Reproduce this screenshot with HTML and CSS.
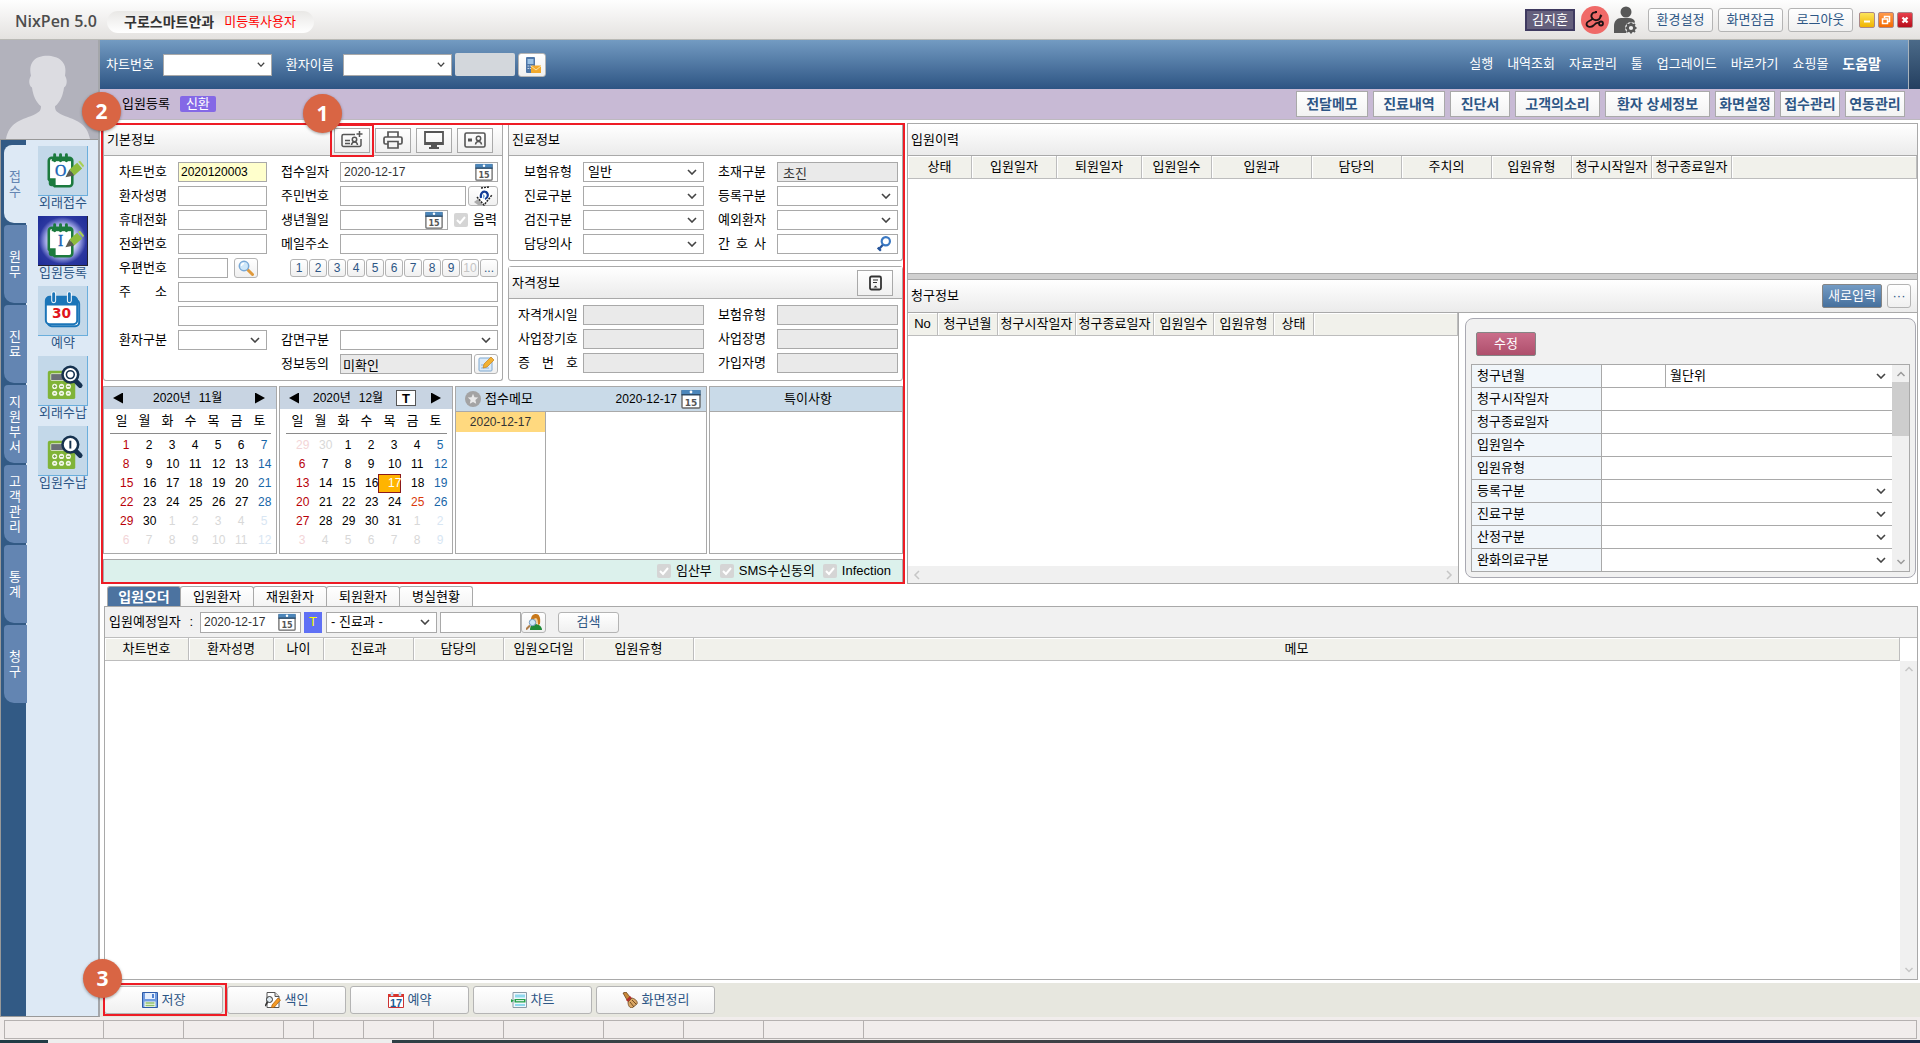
FILE: index.html
```html
<!DOCTYPE html>
<html lang="ko">
<head>
<meta charset="utf-8">
<title>NixPen 5.0</title>
<link rel="stylesheet" href="styles.css">
</head>
<body>
<svg class="defs" aria-hidden="true">
  <symbol id="i-cal" viewBox="0 0 20 20">
    <path d="M1 2h18v16a1 1 0 0 1-1 1H2a1 1 0 0 1-1-1z" fill="#fff" stroke="#666" stroke-width="1.4"/>
    <path d="M.5 1h19v5H.5z" fill="#4c86ba"/><path d="M.5 5h19v1.500H.5z" fill="#2c4a66"/><circle cx="10" cy="3" r="1.400" fill="#fff"/>
    <text x="10" y="17" text-anchor="middle" font-family="DejaVu Sans" font-weight="bold" font-size="9" fill="#555">15</text>
  </symbol>
  <symbol id="i-lens" viewBox="0 0 16 16">
    <path d="M9.500 9.500l5 5" stroke="#e09a3c" stroke-width="3" stroke-linecap="round"/>
    <circle cx="6" cy="6" r="4.700" fill="#cfe8fa" stroke="#7aa9d6" stroke-width="1.500"/><path d="M3.500 6a2.500 2.500 0 0 1 2.500-2.500" stroke="#fff" fill="none" stroke-width="1.300"/>
  </symbol>
  <symbol id="i-note" viewBox="0 0 50 50">
    <path d="M14 12h18a3 3 0 0 1 3 3v23a3 3 0 0 1-3 3H17l-6-7V15a3 3 0 0 1 3-3z" fill="#fff" stroke="#1c7a3e" stroke-width="2.600"/>
    <path d="M11 33h7v8h-4a3 3 0 0 1-3-3z" fill="#1c7a3e"/>
    <path d="M14 14h20" stroke="#1c7a3e" stroke-width="3"/>
    <path d="M17 9v6M23 9v6M29 9v6" stroke="#1c7a3e" stroke-width="3" stroke-linecap="round"/>
    <path d="M32 24l8-7 5 6-8 7z" fill="#8dbb3c"/><path d="M41 16l2-1 4 5-1 2z" fill="#a9d053"/><path d="M32 24l5 6-9 2z" fill="#5b5b52"/>
  </symbol>
  <symbol id="i-calc" viewBox="0 0 50 50">
    <rect x="10" y="15" width="28" height="29" rx="2" fill="#80b438"/>
    <rect x="13" y="18" width="16" height="7" rx="1" fill="#6b6f76" stroke="#e8f2d8" stroke-width=".8"/>
    <g fill="#f4f8ea"><circle cx="17" cy="31" r="2.600"/><circle cx="24" cy="31" r="2.600"/><circle cx="31" cy="31" r="2.600"/><circle cx="17" cy="38" r="2.600"/><circle cx="24" cy="38" r="2.600"/><circle cx="31" cy="38" r="2.600"/></g>
    <path d="M15.500 31h3M17 29.500v3M22.500 31h3M29.500 31h3M16 38h2M23 38h2M30 38h2" stroke="#6f9f3a"/>
    <path d="M38 25l5 5" stroke="#16324f" stroke-width="5" stroke-linecap="round"/>
    <circle cx="33" cy="19" r="8" fill="#fff" stroke="#16324f" stroke-width="2.600"/>
  </symbol>
</svg>

<header class="titlebar">
  <h1 class="app-name">NixPen 5.0</h1>
  <div class="clinic"><b>구로스마트안과</b><span>미등록사용자</span></div>
  <div class="title-tools">
    <span class="user-name">김지훈</span>
    <svg class="stetho" viewBox="0 0 28 28"><circle cx="14" cy="14" r="14" fill="#f06a68"/><path d="M15 6.500c-4-.5-6 3-3.500 6 2 2.500 6.500 2.500 8-1.500M11.500 12.500c-2 3-6 2.500-6 5.500 0 3.500 5 3.500 7 1.500 2-2.500 4-3.500 6.500-2.500" fill="none" stroke="#1c1214" stroke-width="1.800"/><circle cx="20" cy="17.500" r="2" fill="none" stroke="#1c1214" stroke-width="1.800"/><path d="M14 6h2M19 11l1.500-2" stroke="#1c1214" stroke-width="2.200"/></svg>
    <svg class="person" viewBox="0 0 24 28"><circle cx="12" cy="6" r="5.500" fill="#585858"/><path d="M0 27V20c0-5 3-8 7-8h8c3 0 5 1 6 4l-9 11z" fill="#585858"/><circle cx="17" cy="22" r="6" fill="#eee"/><circle cx="17" cy="22" r="3.400" fill="none" stroke="#585858" stroke-width="2.600"/><path d="M17 16.500v2M17 25.500v2M11.500 22h2M20.500 22h2M13 18l1.500 1.500M19.500 24.500l1.500 1.500M21 18l-1.500 1.500M14.500 24.500L13 26" stroke="#585858" stroke-width="2"/></svg>
    <div class="title-btns"><button class="btn">환경설정</button><button class="btn">화면잠금</button><button class="btn">로그아웃</button></div>
    <div class="win-btns">
      <button class="win win-min" aria-label="최소화"><svg viewBox="0 0 14 14"><path d="M4 8.500h6" stroke="#fff" stroke-width="2"/></svg></button>
      <button class="win win-max" aria-label="복원"><svg viewBox="0 0 14 14"><path d="M5.500 5V3.500h5v5H9M3.500 6h5v4.500h-5z" fill="none" stroke="#fff" stroke-width="1.500"/></svg></button>
      <button class="win win-close" aria-label="닫기"><svg viewBox="0 0 14 14"><path d="M4.500 4.500l5 5M9.500 4.500l-5 5" stroke="#fff" stroke-width="2.300"/></svg></button>
    </div>
  </div>
</header>

<div class="app">
  <aside class="side">
    <svg class="avatar" viewBox="0 0 98 100" preserveAspectRatio="none"><path d="M0 0h98v100H0z" fill="#b2b2bc"/><path d="M6 100c3-16 14-19 27-24 6-3 8-4 8-9-5-4-8-11-9-19-4-3-3-9-1-12-3-14 5-20 16-20s21 6 18 20c2 3 3 9-1 12-1 8-4 15-9 19 0 5 2 6 8 9 13 5 24 8 27 24z" fill="#dcdce1"/></svg>
    <div class="side-body">
      <nav class="vtabs">
        <a href="#" class="vtab active"><span>접수</span></a><a href="#" class="vtab"><span>원무</span></a><a href="#" class="vtab"><span>진료</span></a><a href="#" class="vtab"><span>지원부서</span></a><a href="#" class="vtab"><span>고객관리</span></a><a href="#" class="vtab"><span>통계</span></a><a href="#" class="vtab"><span>청구</span></a>
      </nav>
      <nav class="tiles">
        <a href="#" class="tile"><svg viewBox="0 0 50 50"><use href="#i-note"/><text x="23" y="31" text-anchor="middle" font-family="Liberation Serif" font-size="16" fill="#1463b4" stroke="#1463b4" stroke-width=".4">O</text></svg>외래접수</a>
        <a href="#" class="tile selected"><svg viewBox="0 0 50 50"><use href="#i-note"/><text x="23" y="31" text-anchor="middle" font-family="Liberation Serif" font-size="16" fill="#1463b4" stroke="#1463b4" stroke-width=".4">I</text></svg>입원등록</a>
        <a href="#" class="tile"><svg viewBox="0 0 50 50"><rect x="10" y="14" width="32" height="27" rx="4" fill="#fff" stroke="#1b75b8" stroke-width="2"/><rect x="8" y="11" width="32" height="28" rx="4" fill="#fff" stroke="#1b75b8" stroke-width="2"/><path d="M8 20v-5a4 4 0 0 1 4-4h24a4 4 0 0 1 4 4v5z" fill="#1b75b8"/><path d="M16 8v7M32 8v7" stroke="#fff" stroke-width="5" stroke-linecap="round"/><path d="M16 8v7M32 8v7" stroke="#1b75b8" stroke-width="3" stroke-linecap="round"/><text x="24" y="33" text-anchor="middle" font-family="DejaVu Sans" font-weight="bold" font-size="14" fill="#e0141c">30</text></svg>예약</a>
        <a href="#" class="tile"><svg viewBox="0 0 50 50"><use href="#i-calc"/><circle cx="33" cy="19" r="4" fill="none" stroke="#16324f" stroke-width="1.600"/></svg>외래수납</a>
        <a href="#" class="tile"><svg viewBox="0 0 50 50"><use href="#i-calc"/><path d="M33 15v8" stroke="#16324f" stroke-width="2"/></svg>입원수납</a>
      </nav>
    </div>
  </aside>

  <div class="main">
    <div class="topband">
      <label for="q-chart">차트번호</label><select id="q-chart" class="quick"><option></option></select>
      <label for="q-name">환자이름</label><select id="q-name" class="quick"><option></option></select>
      <span class="quick-gray"></span>
      <button class="btn sms" aria-label="문자"><svg viewBox="0 0 18 18"><rect x="3" y="1" width="9" height="16" rx="1" fill="#4f77a8"/><path d="M4.500 3h6v5h-6z" fill="#9cc3e6"/><path d="M4.500 10h6M4.500 12.500h6" stroke="#c8d8e8" stroke-dasharray="1.500 .7"/><path d="M8 9.500h10V17H8z" fill="#f2a92c"/><path d="M8 10l5 4 5-4" fill="none" stroke="#fbe2a6"/></svg></button>
      <nav class="menu"><a href="#">실행</a><a href="#">내역조회</a><a href="#">자료관리</a><a href="#">툴</a><a href="#">업그레이드</a><a href="#">바로가기</a><a href="#">쇼핑몰</a><a href="#"><b>도움말</b></a></nav>
      <span class="band-end"></span>
    </div>
    <div class="subband">
      <h2>입원등록</h2><span class="tag">신환</span>
      <div class="sub-btns"><button>전달메모</button><button>진료내역</button><button>진단서</button><button>고객의소리</button><button>환자 상세정보</button><button>화면설정</button><button>접수관리</button><button>연동관리</button></div>
      <span class="mark mark-2">2</span>
    </div>

    <main class="content">
      <div class="upper">
        <section class="patient">
          <div class="forms">
            <div class="panel first">
              <div class="panel-head"><h3>기본정보</h3>
                <div class="head-btns">
                  <button class="tool target" aria-label="신규 등록"><svg viewBox="0 0 22 18"><path d="M14 3.500H2.500a1.500 1.500 0 0 0-1.500 1.500v9a1.500 1.500 0 0 0 1.500 1.500h16a1.500 1.500 0 0 0 1.500-1.500V8M4 9.500h5M4 12.500h5M10.500 14c.3-2 1.500-3 3-3s2.700 1 3 3M18.500 0v6M15.500 3h6" fill="none" stroke="#555" stroke-width="1.500"/><circle cx="13.500" cy="8.500" r="2.200" fill="none" stroke="#555" stroke-width="1.500"/></svg></button>
                  <button class="tool" aria-label="인쇄"><svg viewBox="0 0 22 18"><path d="M6 6V1h10v5M6 13H3.500A1.500 1.500 0 0 1 2 11.500V7.500A1.500 1.500 0 0 1 3.500 6h15A1.500 1.500 0 0 1 20 7.500v4a1.500 1.500 0 0 1-1.500 1.500H16M6 10.500h10V17H6z" fill="none" stroke="#555" stroke-width="1.700"/></svg></button>
                  <button class="tool" aria-label="화면"><svg viewBox="0 0 22 18"><path d="M2 1h18v12H2z" fill="none" stroke="#555" stroke-width="1.800"/><path d="M2 11h18v2H2zM8 13h6v3H8zM6 16h10v2H6z" fill="#555"/></svg></button>
                  <button class="tool" aria-label="신분증"><svg viewBox="0 0 22 18"><rect x="1" y="2" width="20" height="14" rx="1.500" fill="none" stroke="#555" stroke-width="1.600"/><path d="M4 7.500h4v3H4z" fill="#555"/><circle cx="14.500" cy="7.500" r="2.200" fill="none" stroke="#555" stroke-width="1.500"/><path d="M11.500 13.500c.3-2.300 1.500-3 3-3s2.700.7 3 3" fill="none" stroke="#555" stroke-width="1.500"/></svg></button>
                </div>
                <span class="mark mark-1">1</span>
              </div>
              <form class="grid basic">
                <label for="f1">차트번호</label><input id="f1" class="yellow" value="2020120003">
                <label for="f2">접수일자</label><span class="datebox"><input id="f2" value="2020-12-17"><svg><use href="#i-cal"/></svg></span>
                <label for="f3">환자성명</label><input id="f3">
                <label for="f4">주민번호</label><span class="line"><input id="f4"><button type="button" class="btn w30" aria-label="조회"><svg class="i20" viewBox="0 0 20 20"><path d="M1 16l4-3 5 6H5z" fill="#aaa"/><path d="M8 2l8-1 3 8-8 10-7-8z" fill="#fff"/><path d="M8 2l8-1M4 11l7 8 8-10" fill="none" stroke="#222" stroke-width="1.500" stroke-dasharray="2 1"/><path d="M8 12c-1-5 2-7 5-6 3 2 2 6-1 7" fill="none" stroke="#123c96" stroke-width="2.200"/><path d="M10 8l2 2-2 3z" fill="#6aa3dc"/></svg></button></span>
                <label for="f5">휴대전화</label><input id="f5">
                <label for="f6">생년월일</label><span class="line"><span class="datebox birth"><input id="f6"><svg><use href="#i-cal"/></svg></span><label class="check"><input type="checkbox" checked disabled>음력</label></span>
                <label for="f7">전화번호</label><input id="f7">
                <label for="f8">메일주소</label><input id="f8">
                <label for="f9">우편번호</label><span class="line zip"><input id="f9"><button type="button" class="btn w24" aria-label="검색"><svg class="i16"><use href="#i-lens"/></svg></button></span>
                <span class="nums"><button type="button">1</button><button type="button">2</button><button type="button">3</button><button type="button">4</button><button type="button">5</button><button type="button">6</button><button type="button">7</button><button type="button">8</button><button type="button">9</button><button type="button" disabled>10</button><button type="button">...</button></span>
                <label for="f10" class="spread">주 소</label><input id="f10" class="wide">
                <input class="wide addr2" aria-label="상세주소">
                <label for="f11">환자구분</label><select id="f11"><option></option></select>
                <label for="f12">감면구분</label><select id="f12"><option></option></select>
                <label for="f13" class="consent">정보동의</label><span class="line"><input id="f13" class="off dark" value="미확인" readonly><button type="button" class="btn w24" aria-label="편집"><svg class="i16" viewBox="0 0 16 16"><rect x="1" y="2" width="13" height="13" rx="1" fill="#dbeaf8" stroke="#7fa8cf"/><path d="M3 9h6M3 12h8" stroke="#8db5dc"/><path d="M5 12l1-4 7-7 3 3-7 7z" fill="#f2b233" stroke="#c5811b" stroke-width=".7"/></svg></button></span>
              </form>
            </div>
            <div class="stack">
              <div class="panel first">
                <div class="panel-head"><h3>진료정보</h3></div>
                <form class="grid visit">
                  <label for="v1">보험유형</label><select id="v1"><option>일반</option></select>
                  <label for="v2">초재구분</label><input id="v2" class="off pad" value="초진" readonly>
                  <label for="v3">진료구분</label><select id="v3"><option></option></select>
                  <label for="v4">등록구분</label><select id="v4"><option></option></select>
                  <label for="v5">검진구분</label><select id="v5"><option></option></select>
                  <label for="v6">예외환자</label><select id="v6"><option></option></select>
                  <label for="v7">담당의사</label><select id="v7"><option></option></select>
                  <label for="v8" class="spread">간 호 사</label><span class="datebox"><input id="v8"><svg viewBox="0 0 20 20"><circle cx="12" cy="7" r="4.600" fill="#fff" stroke="#3a78c2" stroke-width="2.400"/><path d="M8.500 11L4 16M3 14l3.500 3.500" stroke="#24539a" stroke-width="2.500"/></svg></span>
                </form>
              </div>
              <div class="panel">
                <div class="panel-head"><h3>자격정보</h3><div class="head-btns"><button class="tool" aria-label="자격조회"><svg viewBox="0 0 22 18"><rect x="6" y="2.500" width="11" height="13" rx="1.500" fill="none" stroke="#333" stroke-width="1.800"/><path d="M9 6h5M9 8.500h4" stroke="#333"/><path d="M9.500 13.500l2-2 2 2z" fill="#333"/></svg></button></div></div>
                <form class="grid insured">
                  <label for="n1">자격개시일</label><input id="n1" class="off" readonly>
                  <label for="n2">보험유형</label><input id="n2" class="off" readonly>
                  <label for="n3">사업장기호</label><input id="n3" class="off" readonly>
                  <label for="n4">사업장명</label><input id="n4" class="off" readonly>
                  <label for="n5" class="spread">증 번 호</label><input id="n5" class="off" readonly>
                  <label for="n6">가입자명</label><input id="n6" class="off" readonly>
                </form>
              </div>
            </div>
          </div>

          <div class="lower">
            <div class="cal">
              <div class="cal-head"><button class="prev" aria-label="이전"></button><span class="ym"><span>2020년</span><span>11월</span></span><button class="next" aria-label="다음"></button></div>
              <table>
                <thead><tr><th>일</th><th>월</th><th>화</th><th>수</th><th>목</th><th>금</th><th>토</th></tr></thead>
                <tbody>
                <tr><td>1</td><td>2</td><td>3</td><td>4</td><td>5</td><td>6</td><td>7</td></tr>
                <tr><td>8</td><td>9</td><td>10</td><td>11</td><td>12</td><td>13</td><td>14</td></tr>
                <tr><td>15</td><td>16</td><td>17</td><td>18</td><td>19</td><td>20</td><td>21</td></tr>
                <tr><td>22</td><td>23</td><td>24</td><td>25</td><td>26</td><td>27</td><td>28</td></tr>
                <tr><td>29</td><td>30</td><td class="out">1</td><td class="out">2</td><td class="out">3</td><td class="out">4</td><td class="out">5</td></tr>
                <tr><td class="out">6</td><td class="out">7</td><td class="out">8</td><td class="out">9</td><td class="out">10</td><td class="out">11</td><td class="out">12</td></tr>
                </tbody>
              </table>
            </div>
            <div class="cal">
              <div class="cal-head"><button class="prev" aria-label="이전"></button><span class="ym"><span>2020년</span><span>12월</span></span><button class="today">T</button><button class="next" aria-label="다음"></button></div>
              <table>
                <thead><tr><th>일</th><th>월</th><th>화</th><th>수</th><th>목</th><th>금</th><th>토</th></tr></thead>
                <tbody>
                <tr><td class="out">29</td><td class="out">30</td><td>1</td><td>2</td><td>3</td><td>4</td><td>5</td></tr>
                <tr><td>6</td><td>7</td><td>8</td><td>9</td><td>10</td><td>11</td><td>12</td></tr>
                <tr><td>13</td><td>14</td><td>15</td><td>16</td><td class="sel">17</td><td>18</td><td>19</td></tr>
                <tr><td>20</td><td>21</td><td>22</td><td>23</td><td>24</td><td class="holiday">25</td><td>26</td></tr>
                <tr><td>27</td><td>28</td><td>29</td><td>30</td><td>31</td><td class="out">1</td><td class="out">2</td></tr>
                <tr><td class="out">3</td><td class="out">4</td><td class="out">5</td><td class="out">6</td><td class="out">7</td><td class="out">8</td><td class="out">9</td></tr>
                </tbody>
              </table>
            </div>
            <div class="memo">
              <div class="memo-head"><svg class="i16" viewBox="0 0 16 16"><circle cx="8" cy="8" r="8" fill="#a3a3a3"/><path d="M8 2.800l1.500 3.400 3.700.4-2.800 2.500.8 3.600L8 10.900l-3.200 1.800.8-3.600-2.800-2.500 3.700-.4z" fill="#e9e9e9"/></svg><span>접수메모</span><span class="memo-date">2020-12-17</span><svg class="i20"><use href="#i-cal"/></svg></div>
              <div class="memo-body"><div class="memo-list"><div class="memo-item">2020-12-17</div></div></div>
            </div>
            <div class="memo remark"><div class="memo-head">특이사항</div></div>
          </div>
          <div class="flags"><label class="check"><input type="checkbox" checked disabled>임산부</label><label class="check"><input type="checkbox" checked disabled>SMS수신동의</label><label class="check"><input type="checkbox" checked disabled>Infection</label></div>
        </section>

        <div class="right">
          <section class="panel square history">
            <div class="panel-head"><h3>입원이력</h3></div>
            <table class="list"><colgroup><col class="c64"><col class="c85"><col class="c85"><col class="c70"><col class="c100"><col class="c90"><col class="c90"><col class="c80"><col class="c80"><col class="c80"><col></colgroup>
            <thead><tr><th>상태</th><th>입원일자</th><th>퇴원일자</th><th>입원일수</th><th>입원과</th><th>담당의</th><th>주치의</th><th>입원유형</th><th>청구시작일자</th><th>청구종료일자</th><th></th></tr></thead></table>
          </section>
          <div class="splitter"></div>
          <section class="panel square billing">
            <div class="panel-head"><h3>청구정보</h3><div class="bill-btns"><button class="btn-blue">새로입력</button><button class="btn dots" aria-label="더보기">···</button></div></div>
            <div class="bill-body">
              <div class="bill-list">
                <table class="list"><colgroup><col class="c30"><col class="c60"><col class="c78"><col class="c78"><col class="c60"><col class="c60"><col class="c40"><col></colgroup>
                <thead><tr><th>No</th><th>청구년월</th><th>청구시작일자</th><th>청구종료일자</th><th>입원일수</th><th>입원유형</th><th>상태</th><th></th></tr></thead></table>
                <div class="hscroll"><svg viewBox="0 0 8 10"><path d="M6 1L2 5l4 4"/></svg><svg viewBox="0 0 8 10"><path d="M2 1l4 4-4 4"/></svg></div>
              </div>
              <div class="editor">
                <button class="btn-pink">수정</button>
                <div class="prop-wrap">
                  <table class="props">
                    <tr><th>청구년월</th><td class="ym-cell"></td><td><select aria-label="청구단위"><option>월단위</option></select></td></tr>
                    <tr><th>청구시작일자</th><td colspan="2"></td></tr>
                    <tr><th>청구종료일자</th><td colspan="2"></td></tr>
                    <tr><th>입원일수</th><td colspan="2"></td></tr>
                    <tr><th>입원유형</th><td colspan="2"></td></tr>
                    <tr><th>등록구분</th><td colspan="2"><select aria-label="등록구분"><option></option></select></td></tr>
                    <tr><th>진료구분</th><td colspan="2"><select aria-label="진료구분"><option></option></select></td></tr>
                    <tr><th>산정구분</th><td colspan="2"><select aria-label="산정구분"><option></option></select></td></tr>
                    <tr><th>완화의료구분</th><td colspan="2"><select aria-label="완화의료구분"><option></option></select></td></tr>
                  </table>
                  <div class="vscroll"><svg viewBox="0 0 10 8"><path d="M1.500 6L5 2.500 8.500 6"/></svg><span class="thumb"></span><svg viewBox="0 0 10 8"><path d="M1.500 2L5 5.500 8.500 2"/></svg></div>
                </div>
              </div>
            </div>
          </section>
        </div>
      </div>

      <nav class="tabs"><button class="on">입원오더</button><button>입원환자</button><button>재원환자</button><button>퇴원환자</button><button>병실현황</button></nav>
      <section class="orders">
        <form class="filter">
          <label for="o1">입원예정일자 <span>:</span></label>
          <span class="datebox order-date"><input id="o1" value="2020-12-17"><svg><use href="#i-cal"/></svg></span>
          <button type="button" class="t-blue">T</button>
          <select class="dept" aria-label="진료과"><option>- 진료과 -</option></select>
          <span class="finder"><input aria-label="환자 검색"><button type="button" class="btn" aria-label="환자 찾기"><svg class="i16" viewBox="0 0 16 16"><path d="M4 16c0-4 2-6 5-6s7 2 7 6z" fill="#1f8a38"/><circle cx="9.500" cy="6" r="4" fill="#f3cf9b"/><path d="M5 6c0-4 2-6 5-6s5 3 4 10l-2 1c0-3 0-6-2-7z" fill="#c8781a"/><circle cx="6.500" cy="8.500" r="3.200" fill="#cfe8f8" stroke="#6f98bc"/><path d="M4 11.500L0 15.500" stroke="#b07d4a" stroke-width="2"/></svg></button></span>
          <button type="button" class="btn search">검색</button>
        </form>
        <div class="order-body">
          <table class="list"><colgroup><col class="c84"><col class="c85"><col class="c50"><col class="c90"><col class="c90"><col class="c80"><col class="c110"><col></colgroup>
          <thead><tr><th>차트번호</th><th>환자성명</th><th>나이</th><th>진료과</th><th>담당의</th><th>입원오더일</th><th>입원유형</th><th>메모</th></tr></thead></table>
          <div class="vscroll pale"><svg viewBox="0 0 10 8"><path d="M1.500 6L5 2.500 8.500 6"/></svg><svg viewBox="0 0 10 8"><path d="M1.500 2L5 5.500 8.500 2"/></svg></div>
        </div>
      </section>
    </main>

    <div class="actions">
      <span class="mark mark-3">3</span>
      <button class="btn target"><svg class="i16" viewBox="0 0 16 16"><path d="M.5.5h15v15H.5z" fill="#6f9be0" stroke="#2e5ba8"/><path d="M3 1h10v6H3z" fill="#e6effc"/><path d="M10 2h2v4h-2z" fill="#4f80cf"/><path d="M2.500 9.500h11V15h-11z" fill="#f6faf0"/><path d="M3.500 11h9M3.500 13.500h9" stroke="#8fbf6c" stroke-width="1.300"/></svg>저장</button>
      <button class="btn"><svg class="i16" viewBox="0 0 16 16"><path d="M2 .5h8l4 4v11H2z" fill="#fff" stroke="#555"/><path d="M10 .5v4h4" fill="#ddd" stroke="#555"/><circle cx="4.500" cy="7.500" r="3" fill="#dfeaf2" stroke="#333"/><path d="M2.500 10L0 14" stroke="#333" stroke-width="1.600"/><path d="M7 13l6-7 2.500 2L9.500 15 6.500 16z" fill="#f59a23" stroke="#a55a0a" stroke-width=".7"/></svg>색인</button>
      <button class="btn"><svg class="i16" viewBox="0 0 16 16"><path d="M.5 3h15v12.500H.5z" fill="#fff" stroke="#c33"/><path d="M0 2h16v3H0z" fill="#d8342c"/><path d="M4 0v4M12 0v4" stroke="#bcd9f0" stroke-width="2.500"/><text x="8" y="14.500" text-anchor="middle" font-family="Liberation Sans" font-weight="bold" font-size="11" fill="#1d5f96">17</text></svg>예약</button>
      <button class="btn"><svg class="i16" viewBox="0 0 16 16"><path d="M2 .5h13.500v15H2z" fill="#eef7fc" stroke="#8a9aa6"/><path d="M4 2.500h10v3H4zM4 12h10v2H4z" fill="#8fd8ee"/><path d="M3.500 7h11v3.500h-11z" fill="#25a04a"/><path d="M5 8.700h8" stroke="#fff"/><path d="M0 7l3 1.700L0 10.500z" fill="#25a04a"/></svg>차트</button>
      <button class="btn"><svg class="i16" viewBox="0 0 16 16"><path d="M1 1l3-1 4 5-3 3z" fill="#c98a3a" stroke="#5a3510" stroke-width=".7"/><path d="M4 8l4-4 2 2-4 4z" fill="#b3312a"/><path d="M6 10l4-4c4 1 6 4 5 6l-5 4c-2 0-4-2-4-6z" fill="#d9a765" stroke="#5a3510" stroke-width=".7"/><path d="M8 10l4 5M10 8l4 4" stroke="#5a3510" stroke-width=".8"/></svg>화면정리</button>
    </div>
  </div>
</div>

<footer class="status"><span class="s99"></span><span class="s80"></span><span class="s100"></span><span class="s30"></span><span class="s50"></span><span class="s70"></span><span class="s70"></span><span class="s100"></span><span class="s80"></span><span class="s80"></span><span class="s100"></span><span class="rest"></span></footer>
<div class="taskbar"><span></span></div>
</body>
</html>
```
FILE: styles.css
```css
* { box-sizing: border-box; }
body {
  margin: 0;
  min-height: 100vh;
  display: flex;
  flex-direction: column;
  background: #fff;
  color: #000;
  font: 13px/16px "Liberation Sans", "Noto Sans CJK KR", sans-serif;
}
h1, h2, h3 { margin: 0; font-size: 13px; font-weight: 400; }
button, input, select { font: inherit; color: inherit; margin: 0; padding: 0; min-width: 0; }
button { white-space: nowrap; cursor: pointer; }
a { color: inherit; text-decoration: none; }
svg { display: block; flex: none; }
.defs { display: none; }
.i16 { width: 16px; height: 16px; }
.i20 { width: 20px; height: 20px; }

.btn {
  display: flex; align-items: center; justify-content: center;
  border: 1px solid #b4b4b4; border-radius: 3px;
  background: linear-gradient(#fff, #f0f0f0); color: #2d5685;
}
input, select {
  border: 1px solid #a9a9a9; border-radius: 0; background-color: #fff;
  height: 20px; width: 100%; outline: 0;
}
input { padding: 0 2px; }
select {
  appearance: none; padding: 0 20px 0 4px;
  background-image: url("data:image/svg+xml,%3Csvg xmlns='http://www.w3.org/2000/svg' width='10' height='6'%3E%3Cpath d='M1 1l4 4 4-4' fill='none' stroke='%23444' stroke-width='1.600'/%3E%3C/svg%3E");
  background-repeat: no-repeat; background-position: right 6px center;
}
input.off { background: #eaeaea; color: #333; }
input.dark { color: #000; }
input.pad { padding-left: 5px; }
input.yellow { background: #ffffcc; font-size: 12px; }

/* title bar */
.titlebar {
  height: 40px; display: flex; align-items: center; padding: 0 7px 0 15px;
  background: linear-gradient(#fefefe, #e4e2e0); border-bottom: 1px solid #b9b9b5;
}
.app-name { font: 600 16px/20px "Open Sans", sans-serif; color: #4d4d4d; width: 92px; padding-top: 2px; white-space: nowrap; }
.clinic {
  height: 22px; width: 207px; border-radius: 11px; padding-left: 17px; margin-top: 4px;
  display: flex; align-items: center; gap: 10px;
  background: linear-gradient(#e9e8e6, #fff); color: #333; white-space: nowrap;
}
.clinic b, .menu b { font-size: 14px; }
.clinic span { color: #f00; }
.title-tools { margin-left: auto; display: flex; align-items: center; gap: 5px; }
.user-name { width: 50px; height: 22px; line-height: 18px; text-align: center; background: #645f7c; border: 2px solid #3f3a60; color: #fff; }
.stetho { width: 28px; height: 28px; margin-left: 1px; }
.person { width: 24px; height: 28px; }
.title-btns { display: flex; gap: 5px; margin-left: 5px; }
.title-btns .btn { width: 65px; height: 24px; }
.win-btns { display: flex; gap: 3px; margin-left: 1px; }
.win { width: 16px; height: 16px; border: 1px solid #a88; border-radius: 2px; }
.win svg { width: 14px; height: 14px; }
.win-min { background: linear-gradient(#fde45a, #f0b400); }
.win-max { background: linear-gradient(#ff9a4a, #f46a00); }
.win-close { background: linear-gradient(#e8404c, #b80f1c); }

/* side bar */
.app { flex: 1; display: flex; }
.side { width: 100px; flex: none; display: flex; flex-direction: column; border-right: 2px solid #a4a6aa; border-bottom: 1px solid #999; }
.avatar { width: 98px; height: 100px; border-bottom: 1px solid #999; }
.side-body { flex: 1; display: flex; background: #dde9f5; }
.vtabs { width: 26px; background: #325a85; border-left: 1px solid #999; padding: 5px 0 0 3px; display: flex; flex-direction: column; gap: 2px; }
.vtab {
  width: 23px; height: 78px; display: flex; align-items: center; justify-content: center;
  background: #6385b2; color: #fff; border-radius: 4px 0 0 10px; line-height: 15px;
}
.vtab span { width: 13px; word-break: break-all; }
.vtab.active { background: #dde9f5; color: #6385b2; border-top-left-radius: 8px; }
.tiles { padding: 6px 0 0 12px; display: flex; flex-direction: column; gap: 6px; }
.tile { width: 50px; display: flex; flex-direction: column; align-items: center; color: #2d5685; line-height: 14px; white-space: nowrap; }
.tile svg { width: 50px; height: 50px; background: #c3d8e9; border: solid #6aaedc; border-width: 0 1px 1px 0; }
.tile.selected svg { background: radial-gradient(#fff 30%, #98a0e2 50%, #2b37a0 68%, #1d2c96); border-color: #223; }

/* bands */
.main { flex: 1; min-width: 0; display: flex; flex-direction: column; }
.topband {
  height: 49px; display: flex; align-items: center; padding-left: 6px; color: #fff; white-space: nowrap;
  background: linear-gradient(#739bc2, #2d5483);
}
.topband select { color: #000; background-size: 8px 5px; }
.quick { width: 109px; height: 22px; margin: 0 14px 0 9px; }
#q-name { margin-right: 3px; }
.quick-gray { width: 60px; height: 23px; border-radius: 2px; background: #d3d7dc; }
.sms { width: 28px; height: 24px; margin-left: 3px; }
.sms svg { width: 18px; height: 18px; }
.menu { margin-left: auto; display: flex; gap: 14px; padding-right: 27px; }
.band-end { width: 12px; height: 49px; border-left: 1px solid #a9b4bd; background: linear-gradient(#4b6a88, #243f60); }
.subband { position: relative; height: 31px; display: flex; align-items: center; padding: 0 15px 0 22px; background: #c8bad5; border-bottom: 1px solid #bdb9bf; white-space: nowrap; }
.tag { width: 36px; height: 16px; margin-left: 10px; line-height: 16px; text-align: center; border-radius: 2px; background: #8468e6; color: #fff; }
.sub-btns { margin-left: auto; display: flex; gap: 5px; }
.sub-btns button { min-width: 60px; height: 26px; padding: 0 3px; border: 1px solid #a9a9a9; background: linear-gradient(#fff, #f2f2f2); color: #2d5685; font-weight: 700; font-size: 14px; }
.sub-btns button:nth-child(-n+2) { width: 72px; }
.sub-btns button:nth-child(4) { width: 85px; }
.sub-btns button:nth-child(5) { width: 105px; }

/* numbered markers lie over the screen */
.mark {
  position: absolute; z-index: 5; width: 39px; height: 39px; border-radius: 50%;
  background: #d96544; color: #fff; font: 700 21px/39px "Open Sans", sans-serif; text-align: center;
  box-shadow: 0 1px 3px rgba(0, 0, 0, .35);
}
.mark-1 { left: 199px; top: -31px; }
.mark-2 { left: -18px; top: 3px; }
.mark-3 { left: -17px; top: -24px; }
.target { position: relative; }
.target::after { content: ""; position: absolute; border: 2px solid #ee1c25; inset: -5px; }

/* panels */
.content { flex: 1; display: flex; flex-direction: column; padding: 3px 2px 0 1px; }
.upper { display: flex; gap: 2px; }
.patient { width: 804px; flex: none; border: 2px solid #ee1c25; }
.forms { display: grid; grid-template-columns: 400px 395px; gap: 5px; }
.stack { display: flex; flex-direction: column; gap: 5px; }
.panel { border: 1px solid #a9a9a9; border-radius: 3px; background: #fff; }
.panel.first { border-top: 0; border-radius: 0 0 3px 3px; }
.panel.square { border-radius: 0; }
.panel-head {
  position: relative; height: 32px; display: flex; align-items: center; justify-content: space-between;
  padding: 0 9px 0 3px; border-bottom: 1px solid #a9a9a9; background: linear-gradient(#fff, #ebebeb); white-space: nowrap;
}
.first .panel-head { height: 31px; }
.head-btns { display: flex; gap: 5px; }
.tool { width: 36px; height: 26px; display: flex; align-items: center; justify-content: center; border: 1px solid #a9a9a9; background: linear-gradient(#fff, #f0f0f0); }
.tool svg { width: 22px; height: 18px; }
.first .tool { height: 25px; }

.grid { display: grid; row-gap: 4px; align-items: center; padding: 6px 4px 6px 15px; white-space: nowrap; }
.basic { grid-template-columns: 59px 89px 73px 1fr; }
.visit { grid-template-columns: 59px 121px 73px 1fr; }
.insured { grid-template-columns: 65px 121px 73px 1fr; padding: 6px 4px 7px 9px; }
.grid > label { line-height: 20px; height: 20px; }
.grid > label:nth-of-type(even) { padding-left: 14px; }
.basic > label.spread, .basic > label[for="f11"] { padding-left: 0; }
.basic > label[for="f12"], .basic > label.consent { padding-left: 14px; }
.spread { width: 48px; text-align-last: justify; }
.visit > .spread { width: 62px; }
.insured > .spread { width: 60px; }
.line { display: flex; gap: 2px; }
.line .btn { height: 20px; flex: none; }
.w30 { width: 30px; }
.w24 { width: 24px; }
.datebox { display: flex; align-items: center; height: 20px; border: 1px solid #a9a9a9; background: #fff; padding-right: 3px; }
.datebox input { border: 0; height: 18px; flex: 1; background: none; padding-left: 3px; color: #333; font-size: 12px; }
.datebox svg { width: 20px; height: 18px; }
.birth { width: 108px; }
.check { display: flex; align-items: center; gap: 5px; }
.line .check { margin-left: 4px; }
.check input {
  appearance: none; width: 14px; height: 14px; border: 0; border-radius: 2px; flex: none;
  background: #d5d5d5 url("data:image/svg+xml,%3Csvg xmlns='http://www.w3.org/2000/svg' width='14' height='14'%3E%3Cpath d='M3 7l3 3 5-6' fill='none' stroke='%23fff' stroke-width='2'/%3E%3C/svg%3E") center no-repeat;
}
.zip { grid-column: 2 / 3; }
.zip input { width: 50px; }
.zip .btn { margin-left: 4px; }
.nums { grid-column: 3 / 5; display: flex; gap: 1px; justify-content: flex-end; }
.nums button { width: 18px; height: 18px; border: 1px solid #b4b4b4; border-radius: 3px; background: linear-gradient(#fff, #f0f0f0); color: #2d5685; font-size: 12px; line-height: 14px; }
.nums button:disabled { color: #c4c4c4; }
.wide { grid-column: 2 / 5; }
.consent { grid-column: 3 / 4; }

/* calendars and memos */
.lower { display: grid; grid-template-columns: 174px 174px 252px 1fr; gap: 2px; margin-top: 5px; height: 168px; }
.cal, .memo { border: 1px solid #a9a9a9; background: #fff; }
.cal-head { position: relative; height: 22px; display: flex; align-items: center; justify-content: space-between; padding: 0 11px 0 9px; background: #c8d4e2; }
.cal-head .ym { flex: 1; display: flex; gap: 8px; padding-left: 30px; font-size: 12px; }
.prev, .next { width: 10px; height: 11px; border: 0; background: #000; clip-path: polygon(0 50%, 100% 0, 100% 100%); }
.next { clip-path: polygon(0 0, 100% 50%, 0 100%); }
.cal-head .today { width: 20px; height: 16px; margin-right: 15px; line-height: 13px; border: 1px solid #555; background: #fff; font-weight: 700; }
.cal-head:has(.today) .ym { padding-left: 14px; }
.cal table { border-collapse: separate; border-spacing: 0; table-layout: fixed; width: 161px; margin-left: 6px; }
.cal th { height: 25px; font-weight: 400; padding: 0; border-bottom: 1px solid #8a8a8a; }
.cal tbody::before { content: ""; display: block; height: 2px; }
.cal td { height: 19px; line-height: 17px; padding: 0 0 0 9px; text-align: center; border: 1px solid transparent; font-size: 12px; }
.cal td:first-child { color: #b80008; }
.cal td:last-child { color: #1766a8; }
.cal td.out { color: #d8d8d8; }
.cal td.out:first-child { color: #f3d5d8; }
.cal td.out:last-child { color: #d8e6f3; }
.cal td.holiday { color: #d93a0b; }
.cal td.sel { background: #ffb400; border-color: #8b1a1a; color: #fff; }
.memo { display: flex; flex-direction: column; }
.memo-head { height: 25px; display: flex; align-items: center; gap: 4px; padding: 0 5px 0 9px; background: #c9dae8; border-bottom: 1px solid #a9a9a9; }
.memo-date { margin-left: auto; font-size: 12px; }
.remark .memo-head { justify-content: center; }
.memo-body { flex: 1; display: flex; }
.memo-list { width: 90px; border-right: 1px solid #a9a9a9; }
.memo-item { height: 20px; line-height: 20px; text-align: center; background: #ffd97f; color: #333; font-size: 12px; }
.flags { height: 23px; margin-top: 5px; display: flex; align-items: center; justify-content: flex-end; gap: 8px; padding-right: 11px; background: #dcf1ec; border: 1px solid #a9a9a9; border-bottom: 0; }

/* list tables */
.list { width: 100%; border-collapse: separate; border-spacing: 0; table-layout: fixed; }
.list th { height: 23px; padding: 0; font-weight: 400; white-space: nowrap; background: #f1f1eb; border-right: 1px solid #bdbdbd; border-bottom: 1px solid #bdbdbd; box-shadow: inset 1px 1px #fff; }
.c30 { width: 30px; } .c40 { width: 40px; } .c50 { width: 50px; } .c60 { width: 60px; } .c64 { width: 64px; }
.c70 { width: 70px; } .c78 { width: 78px; } .c80 { width: 80px; } .c84 { width: 84px; } .c85 { width: 85px; }
.c90 { width: 90px; } .c100 { width: 100px; } .c110 { width: 110px; }

.right { flex: 1; min-width: 0; display: flex; flex-direction: column; }
.history { height: 151px; }
.splitter { height: 5px; background: #d0d0d0; border-left: 1px solid #a9a9a9; border-right: 1px solid #a9a9a9; }
.billing { flex: 1; display: flex; flex-direction: column; }
.billing .panel-head { height: 33px; padding-right: 6px; }
.bill-btns { display: flex; gap: 5px; }
.btn-blue, .btn-pink { width: 60px; height: 24px; border: 1px solid #858585; border-radius: 2px; color: #fff; }
.btn-blue { background: linear-gradient(#739bc4, #46709d); }
.btn-pink { background: linear-gradient(#ca6d8a, #ae4f6c); margin-left: 5px; }
.dots { width: 24px; height: 24px; }
.bill-body { flex: 1; display: flex; gap: 6px; padding-right: 1px; }
.bill-list { flex: 1; min-width: 0; display: flex; flex-direction: column; border-right: 1px solid #a9a9a9; }
.hscroll { height: 17px; margin-top: auto; display: flex; justify-content: space-between; align-items: center; padding: 0 5px; background: #f0f0f0; }
.hscroll svg, .vscroll svg { width: 10px; height: 10px; fill: none; stroke: #9a9a9a; stroke-width: 1.500px; }
.hscroll svg { width: 8px; stroke: #c6c6c6; }
.editor { width: 451px; margin: 5px 0; padding: 13px 5px 5px; border: 1px solid #a9a9b2; border-radius: 8px; background: #f1f1f1; display: flex; flex-direction: column; gap: 8px; }
.prop-wrap { flex: 1; display: flex; border: 1px solid #a9a9a9; background: #fff; }
.props { flex: 1; border-collapse: separate; border-spacing: 0; table-layout: fixed; }
.props th, .props td { height: 23px; padding: 0; border-bottom: 1px solid #a9a9a9; border-right: 1px solid #a9a9a9; }
.props th { width: 130px; padding-left: 5px; text-align: left; font-weight: 400; background: #f1f6fa; }
.props td:last-child { border-right: 0; }
.props tr:last-child > * { border-bottom: 0; height: 22px; }
.props .ym-cell { width: 64px; }
.props select { display: block; border: 0; }
.vscroll { width: 17px; display: flex; flex-direction: column; align-items: center; background: #f0f0f0; padding: 4px 0; }
.vscroll svg:last-child { margin-top: auto; }
.thumb { width: 17px; height: 54px; margin-top: 3px; background: #cdcdcd; }
.pale { padding-top: 3px; margin-top: 23px; }
.pale svg { stroke: #c6c6c6; }

/* order list */
.tabs { display: flex; margin: 2px 0 0 6px; }
.tabs button { width: 74px; margin-right: -1px; height: 20px; border: 1px solid #a9a9a9; border-bottom: 0; border-radius: 3px 3px 0 0; background: linear-gradient(#fff, #f4f4f4); }
.tabs .on { background: #4c73a0; color: #fff; font-weight: 700; font-size: 14px; }
.orders { flex: 1; display: flex; flex-direction: column; margin: 0 0 3px 3px; border: 1px solid #a9a9a9; }
.filter { height: 31px; display: flex; align-items: center; padding: 0 4px; background: #f1f1f1; border-bottom: 1px solid #bdbdbd; white-space: nowrap; }
.filter label { width: 91px; }
.filter label span { margin-left: 5px; }
.filter .datebox, .filter select, .filter input, .filter button { height: 21px; }
.filter .order-date { width: 101px; }
.filter .order-date input { height: 19px; border: 0; }
.t-blue { width: 18px; margin: 0 4px 0 3px; border: 0; background: #5f70f5; color: #ff0; }
.dept { width: 111px; }
.finder { display: flex; width: 106px; margin: 0 12px 0 3px; }
.finder .btn { width: 25px; flex: none; }
.search { width: 61px; }
.order-body { flex: 1; display: flex; align-items: stretch; }
.order-body .list { flex: 1; align-self: flex-start; }

/* bottom */
.actions { position: relative; height: 34px; display: flex; align-items: center; gap: 4px; padding-left: 4px; background: #e7e7df; }
.actions .btn { width: 119px; height: 28px; gap: 4px; }
.actions .target::after { inset: -4px -5px -3px -2px; }
.status { height: 23px; display: flex; padding: 3px 3px 0 4px; background: #f1edec; }
.status span { height: 19px; border: solid #b5b1b0; border-width: 1px 0 1px 1px; }
.s30 { width: 30px; } .s50 { width: 50px; } .s70 { width: 70px; } .s80 { width: 80px; } .s99 { width: 99px; } .s100 { width: 100px; }
.status .rest { flex: 1; border-right-width: 1px; }
.taskbar { height: 3px; background: linear-gradient(90deg, #1f3b45, #454545 50%, #1b2746 80%); padding-left: 48px; }
.taskbar span { display: block; width: 344px; height: 3px; background: #eee; }
```
